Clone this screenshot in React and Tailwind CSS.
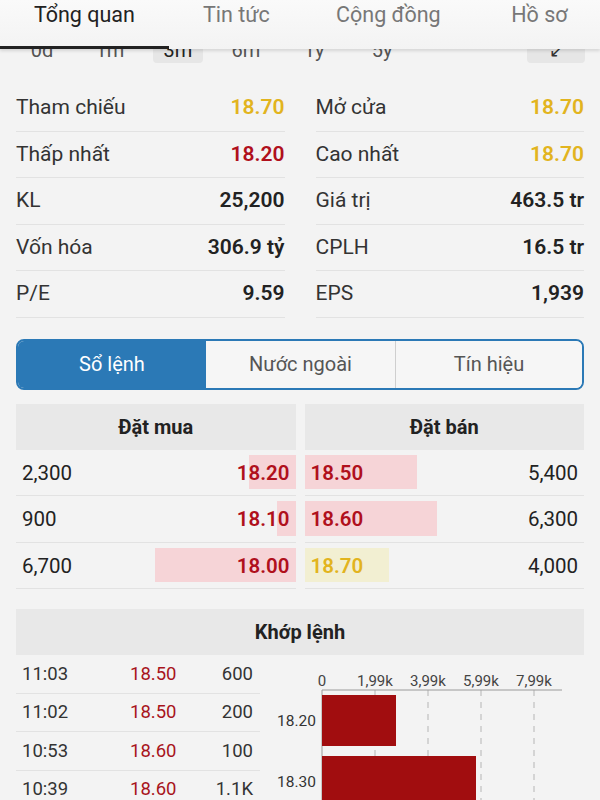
import React from "react";

const stats = [
  ["Tham chiếu", "18.70", "text-[#e2b41e]", "Mở cửa", "18.70", "text-[#e2b41e]"],
  ["Thấp nhất", "18.20", "text-[#b0101c]", "Cao nhất", "18.70", "text-[#e2b41e]"],
  ["KL", "25,200", "text-[#222]", "Giá trị", "463.5 tr", "text-[#222]"],
  ["Vốn hóa", "306.9 tỷ", "text-[#222]", "CPLH", "16.5 tr", "text-[#222]"],
  ["P/E", "9.59", "text-[#222]", "EPS", "1,939", "text-[#222]"],
];

const bids = [
  { qty: "2,300", price: "18.20", bar: 47 },
  { qty: "900", price: "18.10", bar: 19 },
  { qty: "6,700", price: "18.00", bar: 141 },
];

const asks = [
  { qty: "5,400", price: "18.50", bar: 112, ref: false },
  { qty: "6,300", price: "18.60", bar: 132, ref: false },
  { qty: "4,000", price: "18.70", bar: 84, ref: true },
];

const trades = [
  ["11:03", "18.50", "600"],
  ["11:02", "18.50", "200"],
  ["10:53", "18.60", "100"],
  ["10:39", "18.60", "1.1K"],
];

function Stat({ label, value, color }) {
  return (
    <div className="flex items-center justify-between h-[46.5px] border-b border-[#e2e2e2]">
      <span className="text-[21px] text-[#333]">{label}</span>
      <span className={"text-[21px] font-semibold " + color}>{value}</span>
    </div>
  );
}

export default function App() {
  return (
    <div className="relative w-[600px] h-[800px] overflow-hidden bg-[#f3f3f3] font-['Roboto',sans-serif]">
      {/* top tabs, sticky over the scrolled content */}
      <div className="absolute top-0 left-0 z-10 w-full h-[49px] bg-gradient-to-b from-[#fafafa] to-[#f3f3f3] shadow-[0_2px_3px_rgba(0,0,0,0.12)] flex">
        <div className="w-[170px] h-full flex flex-col justify-between items-center">
          <span className="pt-[3px] leading-[24px] text-[21.5px] text-[#222]">Tổng quan</span>
          <div className="w-full h-[3px] bg-[#222]" />
        </div>
        <div className="w-[136px] flex justify-center pt-[3px] leading-[24px] text-[21.5px] text-[#777]">Tin tức</div>
        <div className="w-[170px] flex justify-center pt-[3px] leading-[24px] text-[21.5px] text-[#777]">Cộng đồng</div>
        <div className="w-[128px] flex justify-center pl-[6px] pt-[3px] leading-[24px] text-[21.5px] text-[#777]">Hồ sơ</div>
      </div>

      <div className="pt-[32px]">
        {/* time range row */}
        <div className="h-[36px] flex items-center pl-[17px] pr-[15px]">
          <div className="flex gap-[18px] text-[20px] text-[#555]">
            <span className="w-[50px] h-[26px] flex items-center justify-center">0d</span>
            <span className="w-[50px] h-[26px] flex items-center justify-center">1m</span>
            <span className="w-[50px] h-[26px] flex items-center justify-center rounded bg-[#e6e6e6] text-[#222]">3m</span>
            <span className="w-[50px] h-[26px] flex items-center justify-center">6m</span>
            <span className="w-[50px] h-[26px] flex items-center justify-center">1y</span>
            <span className="w-[50px] h-[26px] flex items-center justify-center">5y</span>
          </div>
          <div className="ml-auto w-[58px] h-[26px] rounded bg-[#e6e6e6] flex items-center justify-center text-[18px] text-[#333]">↙</div>
        </div>

        {/* stats */}
        <div className="mt-[17px] px-4 grid grid-cols-2 gap-x-[31px]">
          {stats.map((r) => (
            <React.Fragment key={r[0]}>
              <Stat label={r[0]} value={r[1]} color={r[2]} />
              <Stat label={r[3]} value={r[4]} color={r[5]} />
            </React.Fragment>
          ))}
        </div>

        {/* segmented tabs */}
        <div className="mt-[21px] mx-4 h-[51px] flex rounded-[8px] border-2 border-[#2b79b6] overflow-hidden text-[20px]">
          <div className="w-[188px] bg-[#2b79b6] text-white flex items-center justify-center">Sổ lệnh</div>
          <div className="w-[190px] bg-[#f6f6f6] text-[#555] flex items-center justify-center border-r border-[#cfcfcf]">Nước ngoài</div>
          <div className="flex-1 bg-[#f6f6f6] text-[#555] flex items-center justify-center">Tín hiệu</div>
        </div>

        {/* order book */}
        <div className="mt-[14px] mx-4 grid grid-cols-2 gap-x-[9px]">
          <div>
            <div className="h-[46px] bg-[#e8e8e8] flex items-center justify-center text-[20px] font-bold text-[#222]">Đặt mua</div>
            {bids.map((b) => (
              <div key={b.price} className="relative h-[46.5px] border-b border-[#e2e2e2] flex items-center justify-between px-[6px] pt-[2px] text-[20.5px]">
                <div className="absolute right-0 top-[5px] bottom-[6px] bg-[#f6d4d7]" style={{ width: b.bar }} />
                <span className="relative text-[#222]">{b.qty}</span>
                <span className="relative font-semibold text-[#b0101c]">{b.price}</span>
              </div>
            ))}
          </div>
          <div>
            <div className="h-[46px] bg-[#e8e8e8] flex items-center justify-center text-[20px] font-bold text-[#222]">Đặt bán</div>
            {asks.map((a) => (
              <div key={a.price} className="relative h-[46.5px] border-b border-[#e2e2e2] flex items-center justify-between px-[6px] pt-[2px] text-[20.5px]">
                <div className={"absolute left-0 top-[5px] bottom-[6px] " + (a.ref ? "bg-[#f2efd2]" : "bg-[#f6d4d7]")} style={{ width: a.bar }} />
                <span className={"relative font-semibold " + (a.ref ? "text-[#e2b41e]" : "text-[#b0101c]")}>{a.price}</span>
                <span className="relative text-[#222]">{a.qty}</span>
              </div>
            ))}
          </div>
        </div>

        {/* matched orders */}
        <div className="mt-5 mx-4 h-[46px] bg-[#e8e8e8] flex items-center justify-center text-[20px] font-bold text-[#222]">Khớp lệnh</div>
        <div className="flex pl-4">
          <div className="w-[244px]">
            {trades.map((t, i) => (
              <div key={i} className="h-[38.5px] border-b border-[#e2e2e2] flex items-center px-[6px] pt-[2px] text-[18.5px]">
                <span className="w-[108px] text-[#333]">{t[0]}</span>
                <span className="text-[#a8141c]">{t[1]}</span>
                <span className="ml-auto pr-[1px] text-[#333]">{t[2]}</span>
              </div>
            ))}
          </div>
          <svg width="315" height="150" viewBox="0 0 315 150" className="ml-[10px] -mt-[2px] shrink-0">
            <g fontFamily="Roboto, sans-serif" fontSize="15" fill="#444" textAnchor="middle">
              <text x="52" y="33">0</text>
              <text x="105" y="33">1,99k</text>
              <text x="158" y="33">3,99k</text>
              <text x="211" y="33">5,99k</text>
              <text x="264" y="33">7,99k</text>
            </g>
            <g stroke="#b5b5b5" strokeWidth="1" strokeDasharray="6 6">
              <line x1="105" y1="37" x2="105" y2="150" />
              <line x1="158" y1="37" x2="158" y2="150" />
              <line x1="211" y1="37" x2="211" y2="150" />
              <line x1="264" y1="37" x2="264" y2="150" />
            </g>
            <line x1="52" y1="37" x2="292" y2="37" stroke="#9a9a9a" strokeWidth="1" />
            <line x1="52" y1="37" x2="52" y2="150" stroke="#9a9a9a" strokeWidth="1" />
            <rect x="52" y="42" width="74" height="51" fill="#a10d0f" />
            <rect x="52" y="103" width="154" height="50" fill="#a10d0f" />
            <g fontFamily="Roboto, sans-serif" fontSize="15.5" fill="#333" textAnchor="end">
              <text x="46" y="73">18.20</text>
              <text x="46" y="134">18.30</text>
            </g>
          </svg>
        </div>
      </div>
    </div>
  );
}
